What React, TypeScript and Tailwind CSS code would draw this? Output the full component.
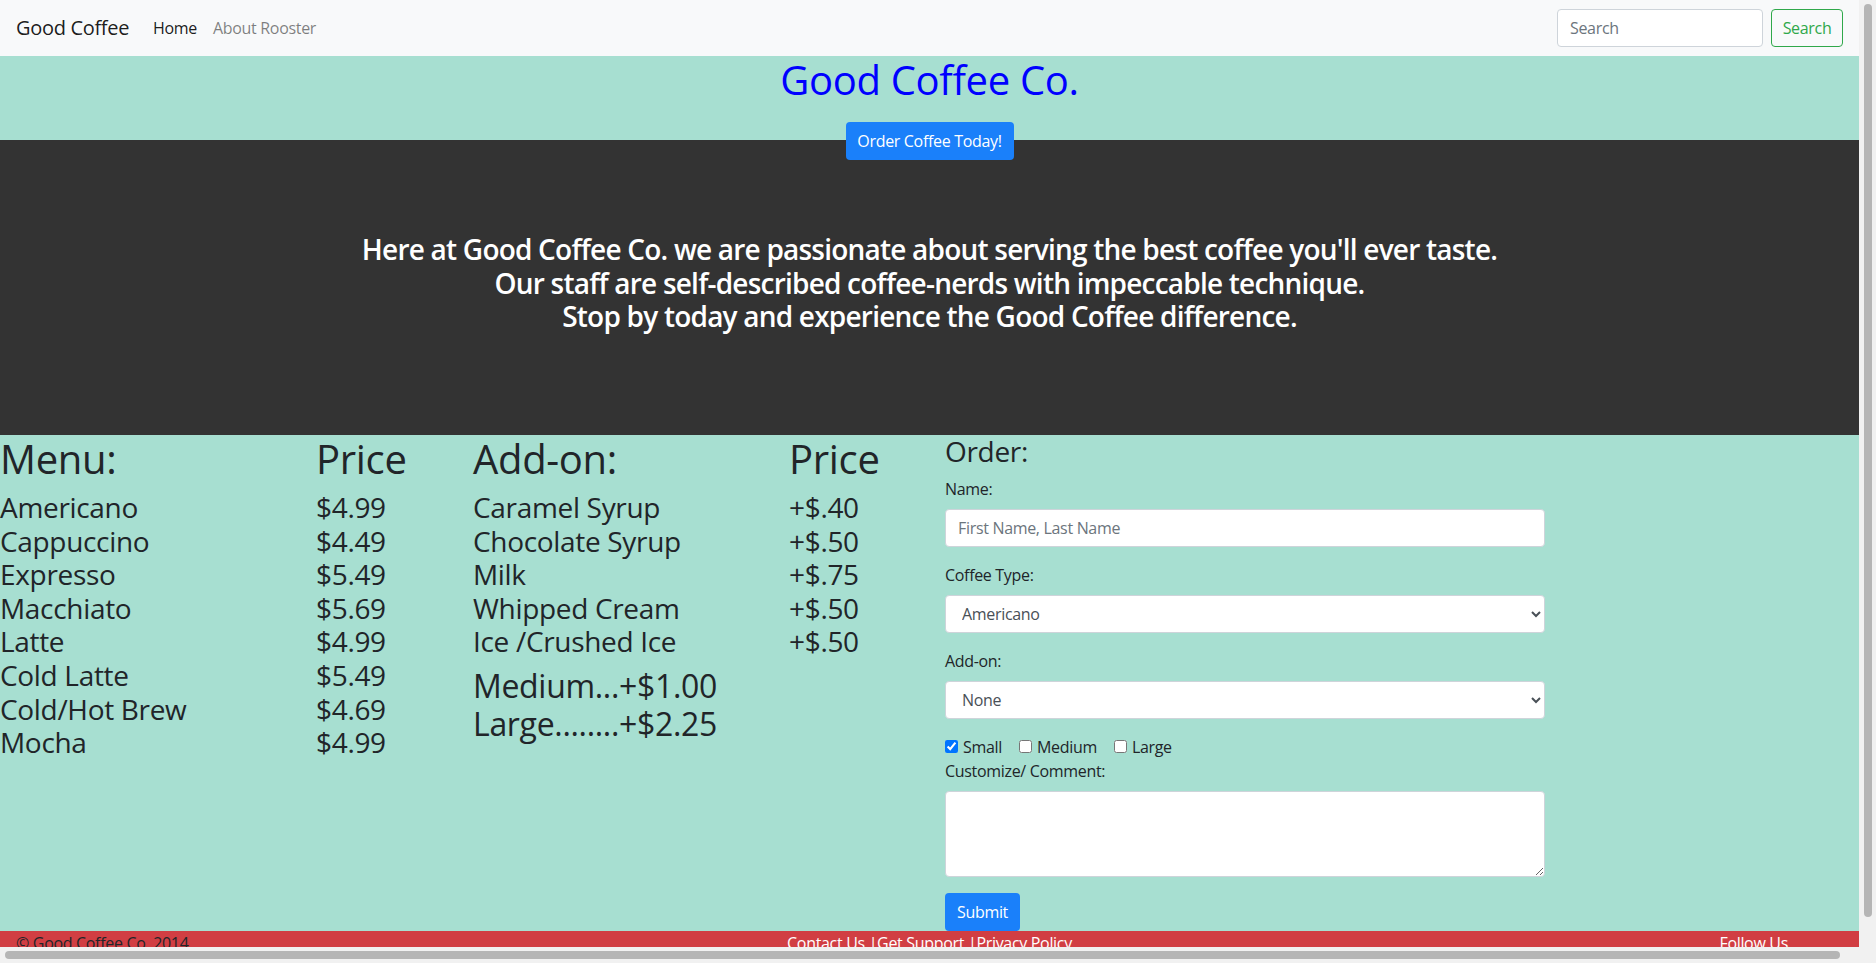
const menu = [
  ["Americano", "$4.99"],
  ["Cappuccino", "$4.49"],
  ["Expresso", "$5.49"],
  ["Macchiato", "$5.69"],
  ["Latte", "$4.99"],
  ["Cold Latte", "$5.49"],
  ["Cold/Hot Brew", "$4.69"],
  ["Mocha", "$4.99"],
];

const addons = [
  ["Caramel Syrup", "+$.40"],
  ["Chocolate Syrup", "+$.50"],
  ["Milk", "+$.75"],
  ["Whipped Cream", "+$.50"],
  ["Ice /Crushed Ice", "+$.50"],
];

function Navbar() {
  return (
    <nav className="flex h-[56px] items-center bg-[#f8f9fa] px-4">
      <span className="mr-4 text-[20px] leading-[30px] text-black/90">Good Coffee</span>
      <a className="px-2 text-black/90">Home</a>
      <a className="px-2 text-black/50">About Rooster</a>
      <div className="ml-auto flex items-center">
        <input
          placeholder="Search"
          className="mr-2 h-[38px] w-[206px] rounded border border-[#ced4da] bg-white px-3 text-[#495057] placeholder:text-[#6c757d]"
        />
        <button className="h-[38px] w-[72px] rounded border border-[#2fa84a] text-[#2fa84a]">Search</button>
      </div>
    </nav>
  );
}

function Field({ label, children }: { label: string; children: React.ReactNode }) {
  return (
    <div className="mb-4">
      <label className="mb-2 block leading-6">{label}</label>
      {children}
    </div>
  );
}

function OrderForm() {
  const ctl = "block h-[38px] w-full rounded border border-[#ced4da] bg-white px-3 text-[#495057]";
  return (
    <form className="w-[600px]">
      <h3 className="mb-2 text-[28px] font-medium leading-[33.6px]">Order:</h3>
      <Field label="Name:">
        <input className={ctl + " placeholder:text-[#6c757d]"} placeholder="First Name, Last Name" />
      </Field>
      <Field label="Coffee Type:">
        <select className={ctl} defaultValue="Americano">
          {menu.map(([n]) => (
            <option key={n}>{n}</option>
          ))}
        </select>
      </Field>
      <Field label="Add-on:">
        <select className={ctl} defaultValue="None">
          <option>None</option>
          {addons.map(([n]) => (
            <option key={n}>{n}</option>
          ))}
        </select>
      </Field>
      <div className="flex h-6 items-center gap-[17px]">
        <label className="flex items-center gap-[5px]">
          <input type="checkbox" defaultChecked className="m-0 h-[13px] w-[13px]" />
          Small
        </label>
        <label className="flex items-center gap-[5px]">
          <input type="checkbox" className="m-0 h-[13px] w-[13px]" />
          Medium
        </label>
        <label className="flex items-center gap-[5px]">
          <input type="checkbox" className="m-0 h-[13px] w-[13px]" />
          Large
        </label>
      </div>
      <label className="mb-2 block leading-6">Customize/ Comment:</label>
      <textarea rows={3} className="mb-4 block h-[86px] w-full rounded border border-[#ced4da] bg-white px-3 py-1.5" />
      <button type="button" className="h-[38px] w-[75px] rounded bg-[#1a80fa] text-white">
        Submit
      </button>
    </form>
  );
}

function Page() {
  return (
    <div className="text-[16px] leading-6 tracking-[-0.02em] text-[#212529]">
      <Navbar />
      <header className="flex h-[84px] flex-col items-center bg-[#a7dfd1]">
        <h1 className="text-[40px] leading-[48px] font-medium text-[#0000ff]">Good Coffee Co.</h1>
        <button className="relative z-10 mt-[18px] h-[38px] w-[168px] shrink-0 rounded bg-[#1a80fa] text-white">
          Order Coffee Today!
        </button>
      </header>
      <section className="flex h-[295px] items-center justify-center bg-[#333333] pb-[8px]">
        <h3 className="text-center text-[28px] font-semibold leading-[33.6px] tracking-[-0.028em] text-white">
          Here at Good Coffee Co. we are passionate about serving the best coffee you'll ever taste.
          <br />
          Our staff are self-described coffee-nerds with impeccable technique.
          <br />
          Stop by today and experience the Good Coffee difference.
        </h3>
      </section>
      <section className="flex bg-[#a7dfd1]">
        <div className="w-[316px]">
          <h1 className="mb-2 text-[40px] font-medium leading-[48px]">Menu:</h1>
          {menu.map(([n]) => (
            <h3 key={n} className="text-[28px] font-medium leading-[33.6px]">{n}</h3>
          ))}
        </div>
        <div className="w-[157px]">
          <h1 className="mb-2 text-[40px] font-medium leading-[48px]">Price</h1>
          {menu.map(([n, p]) => (
            <h3 key={n} className="text-[28px] font-medium leading-[33.6px]">{p}</h3>
          ))}
        </div>
        <div className="w-[316px]">
          <h1 className="mb-2 text-[40px] font-medium leading-[48px]">Add-on:</h1>
          <div className="mb-2">
            {addons.map(([n]) => (
              <h3 key={n} className="text-[28px] font-medium leading-[33.6px]">{n}</h3>
            ))}
          </div>
          <h2 className="text-[32px] font-medium leading-[38.4px]">Medium...+$1.00</h2>
          <h2 className="text-[32px] font-medium leading-[38.4px]">Large........+$2.25</h2>
        </div>
        <div className="w-[156px]">
          <h1 className="mb-2 text-[40px] font-medium leading-[48px]">Price</h1>
          {addons.map(([n, p]) => (
            <h3 key={n} className="text-[28px] font-medium leading-[33.6px]">{p}</h3>
          ))}
        </div>
        <OrderForm />
      </section>
      <footer className="grid h-[40px] grid-cols-3 bg-[#d13e43]">
        <p className="pl-4">© Good Coffee Co. 2014</p>
        <p className="text-center text-white">Contact Us |Get Support |Privacy Policy</p>
        <p className="pr-[71px] text-right text-white">Follow Us</p>
      </footer>
    </div>
  );
}

export default function App() {
  return (
    <div className="flex h-[963px] w-[1876px] overflow-hidden font-['Open_Sans',sans-serif]">
      <div className="flex w-[1859px] flex-col">
        <div className="h-[947px] overflow-hidden">
          <Page />
        </div>
        <div className="h-[16px] bg-[#f1f1f1] py-[4px] pl-[5px]">
          <div className="h-[8px] w-[1835px] rounded-full bg-[#b5b5b5]" />
        </div>
      </div>
      <div className="w-[17px] bg-[#f1f1f1] pt-[4px] pl-[5px]">
        <div className="h-[913px] w-[8px] rounded-full bg-[#b5b5b5]" />
      </div>
    </div>
  );
}
